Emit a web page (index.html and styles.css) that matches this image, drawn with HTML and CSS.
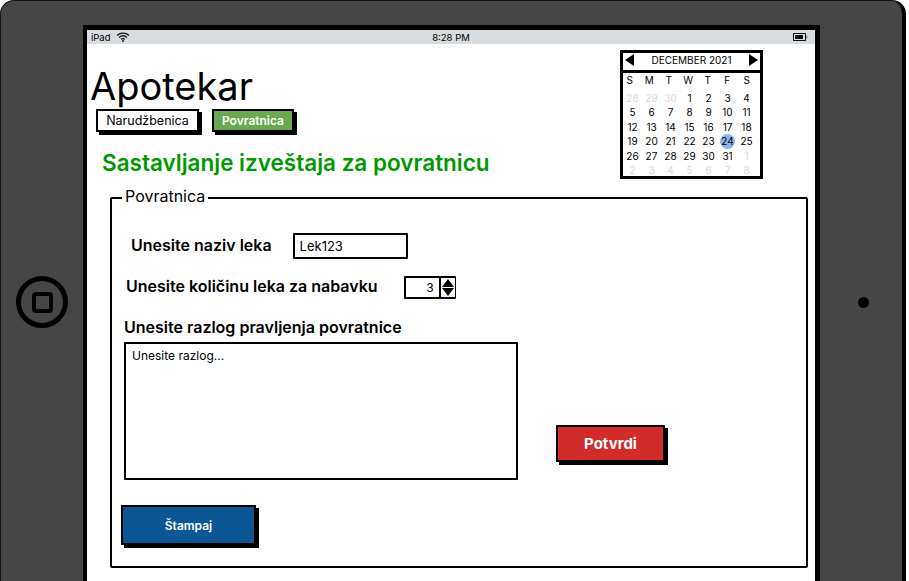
FILE: index.html

```html
<!DOCTYPE html>
<html lang="sr">
<head>
  <meta charset="UTF-8">
  <title>Apotekar</title>
  <link rel="stylesheet" href="styles.css">
</head>
<body>

  <div class="tablet">
    <div class="gutter-left">
      <span class="home-btn"><span class="home-inner"></span></span>
    </div>

    <div class="screen">
      <div class="status-bar">
        <span class="status-left">iPad
          <svg class="wifi" width="14" height="10" viewBox="0 0 14 10">
            <path d="M1 3.4C4.5 .4 9.5 .4 13 3.4M3 5.4C5.3 3.5 8.7 3.5 11 5.4M5 7.3C6.2 6.4 7.8 6.4 9 7.3" fill="none" stroke="#111" stroke-width="1.3"/>
            <circle cx="7" cy="9" r="1" fill="#111"/>
          </svg>
        </span>
        <span class="status-time">8:28 PM</span>
        <svg class="battery" width="15" height="8" viewBox="0 0 15 8">
          <rect x=".5" y=".5" width="12" height="7" fill="none" stroke="#111"/>
          <rect x="2" y="2" width="8" height="4" fill="#111"/>
          <rect x="13" y="2.5" width="1.5" height="3" fill="#999"/>
        </svg>
      </div>

      <div class="top-row">
        <div class="top-left">
          <h1>Apotekar</h1>
          <nav class="tabs">
            <a class="tab">Narudžbenica</a>
            <a class="tab active">Povratnica</a>
          </nav>
          <h2>Sastavljanje izveštaja za povratnicu</h2>
        </div>

        <div class="calendar">
          <div class="cal-head">
            <span class="arrow-left"></span>
            <span>DECEMBER 2021</span>
            <span class="arrow-right"></span>
          </div>
          <div class="cal-grid cal-days">
            <span>S</span><span>M</span><span>T</span><span>W</span><span>T</span><span>F</span><span>S</span>
          </div>
          <div class="cal-grid cal-dates">
            <span class="off">28</span><span class="off">29</span><span class="off">30</span><span>1</span><span>2</span><span>3</span><span>4</span>
            <span>5</span><span>6</span><span>7</span><span>8</span><span>9</span><span>10</span><span>11</span>
            <span>12</span><span>13</span><span>14</span><span>15</span><span>16</span><span>17</span><span>18</span>
            <span>19</span><span>20</span><span>21</span><span>22</span><span>23</span><span class="today">24</span><span>25</span>
            <span>26</span><span>27</span><span>28</span><span>29</span><span>30</span><span>31</span><span class="off">1</span>
            <span class="off">2</span><span class="off">3</span><span class="off">4</span><span class="off">5</span><span class="off">6</span><span class="off">7</span><span class="off">8</span>
          </div>
        </div>
      </div>

      <fieldset class="panel">
        <legend>Povratnica</legend>

        <div class="row row-name">
          <label>Unesite naziv leka</label>
          <input class="text-input" type="text" value="Lek123">
        </div>

        <div class="row row-qty">
          <label>Unesite količinu leka za nabavku</label>
          <div class="stepper">
            <span class="stepper-val">3</span>
            <span class="stepper-arrows"><i class="up"></i><i class="down"></i></span>
          </div>
        </div>

        <label class="reason-label">Unesite razlog pravljenja povratnice</label>
        <div class="reason-row">
          <textarea class="reason" placeholder="Unesite razlog..."></textarea>
          <button class="btn btn-confirm">Potvrdi</button>
        </div>

        <button class="btn btn-print">Štampaj</button>
      </fieldset>
    </div>

    <div class="gutter-right">
      <span class="camera"></span>
    </div>
  </div>

</body>
</html>
```

FILE: styles.css

```css
html, body { margin: 0; height: 581px; overflow: hidden; background: #fff; }
body { font-family: "Inter", "Open Sans", sans-serif; color: #000; }

.tablet { display: grid; grid-template-columns: 82px 737px 1fr; width: 906px; height: 604px; background: #464646; border-radius: 14px; border: 1px solid #111; border-right: 4px solid #000; box-sizing: border-box; }

.gutter-left { display: flex; align-items: center; justify-content: center; }
.home-btn { width: 42px; height: 42px; border: 5px solid #000; border-radius: 50%; display: flex; align-items: center; justify-content: center; }
.home-inner { width: 13px; height: 13px; border: 4px solid #000; border-radius: 4px; }
.gutter-right { display: flex; align-items: center; justify-content: center; padding-left: 4px; }
.camera { width: 11px; height: 11px; background: #000; border-radius: 50%; }

.screen { margin-top: 24px; border-style: solid; border-color: #000; border-width: 5px 5px 0 4px; background: #fff; display: flex; flex-direction: column; box-sizing: border-box; }

.status-bar { height: 14px; background: #d6dcdf; display: grid; grid-template-columns: 1fr auto 1fr; align-items: center; padding: 0 7px; font-size: 9.5px; }
.status-left { display: flex; align-items: center; gap: 5px; margin-left: -3px; }
.battery { justify-self: end; }

.top-row { display: flex; justify-content: space-between; align-items: flex-start; padding: 6px 52px 0 3px; height: 144px; box-sizing: border-box; }
h1 { font-size: 38px; font-weight: 400; margin: 15px 0 0 0; line-height: 42px; }
.tabs { display: flex; gap: 13px; margin: 2px 0 0 6px; }
.tab { display: block; height: 19px; line-height: 19px; border: 2px solid #000; box-shadow: 3px 3px 0 #000; font-size: 12.5px; text-align: center; }
.tab:first-child { width: 99px; }
.tab.active { width: 78px; background: #6aa84f; color: #fff; font-weight: 600; font-size: 12px; }
h2 { color: #009900; font-size: 22.5px; font-weight: 600; margin: 16px 0 0 12px; line-height: 30px; }

.calendar { width: 143px; height: 129px; border: 3px solid #000; box-sizing: border-box; font-size: 10px; }
.cal-head { height: 14px; border-bottom: 3px solid #000; display: flex; align-items: center; justify-content: space-between; padding: 0 2px 3px; box-sizing: content-box; }
.arrow-left { border: 6px solid transparent; border-left-width: 0; border-right: 9px solid #000; }
.arrow-right { border: 6px solid transparent; border-right-width: 0; border-left: 9px solid #000; }
.cal-grid { display: grid; grid-template-columns: repeat(7, 19px); text-align: center; }
.cal-days { grid-template-columns: repeat(7, 19.5px); margin-left: -3px; margin-top: -1px; height: 16px; line-height: 16px; }
.cal-dates { grid-auto-rows: 14.4px; line-height: 14.4px; margin-top: 3px; }
.cal-dates .off { color: #d8d8d8; }
.cal-dates .today { background: #8fb6ea; border-radius: 50%; width: 15px; height: 15px; justify-self: center; }

.panel { margin: 0 7px 0 23px; height: 380px; border: 2px solid #000; border-radius: 2px; padding: 0 0 0 11px; box-sizing: border-box; min-width: 0; }
legend { font-size: 16px; line-height: 16px; padding: 0 3px 3px; margin-left: -1px; }

.row { display: flex; align-items: center; }
.row label, .reason-label { font-size: 16px; font-weight: 600; display: block; }
.row label { margin-bottom: 3px; }
.row-name { margin: 26px 0 0 8px; gap: 22px; }
.text-input { width: 115px; height: 26px; border: 2px solid #000; box-sizing: border-box; font: inherit; font-size: 13px; padding: 0 0 0 5px; outline: none; border-radius: 1px; margin-left: -1px; }
.row-qty { margin: 17px 0 0 3px; gap: 26px; }
.stepper { width: 52px; height: 23px; border: 1px solid #000; border-width: 2px 1px 2px 2px; box-sizing: border-box; display: flex; border-radius: 1px; }
.stepper-val { flex: 1; font-size: 12px; text-align: right; padding-right: 5px; line-height: 19px; }
.stepper-arrows { width: 14px; border-left: 2px solid #000; display: flex; flex-direction: column; align-items: center; justify-content: center; gap: 1px; }
.stepper-arrows i { width: 0; height: 0; border: 6px solid transparent; border-top-width: 0; border-bottom: 8px solid #000; }
.stepper-arrows .down { border: 6px solid transparent; border-bottom-width: 0; border-top: 8px solid #000; }
.reason-label { margin: 19px 0 0 1px; line-height: 18px; }

.reason-row { display: flex; align-items: flex-end; gap: 38px; margin: 6px 0 0 1px; }
.reason { width: 394px; height: 138px; border: 2px solid #000; box-sizing: border-box; font: inherit; font-size: 12px; padding: 4px 6px; resize: none; outline: none; border-radius: 1px; display: block; }
.reason::placeholder { color: #000; opacity: 1; }

.btn { border: 2px solid #000; box-shadow: 3px 3px 0 #000; color: #fff; font-family: inherit; padding: 0; display: block; }
.btn-confirm { width: 109px; height: 37px; background: #d22c2a; font-size: 15px; font-weight: 700; margin-bottom: 18px; }
.btn-print { width: 135px; height: 40px; background: #0b5795; font-size: 12px; font-weight: 600; margin: 25px 0 0 -2px; }
```
